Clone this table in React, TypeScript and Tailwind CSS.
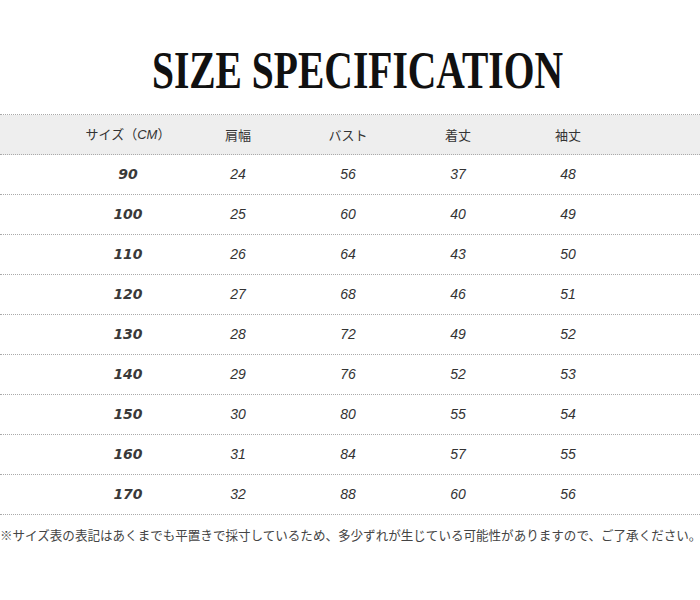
import React from "react";

const rows = [
  ["90", "24", "56", "37", "48"],
  ["100", "25", "60", "40", "49"],
  ["110", "26", "64", "43", "50"],
  ["120", "27", "68", "46", "51"],
  ["130", "28", "72", "49", "52"],
  ["140", "29", "76", "52", "53"],
  ["150", "30", "80", "55", "54"],
  ["160", "31", "84", "57", "55"],
  ["170", "32", "88", "60", "56"],
];

export default function App() {
  return (
    <div className="w-[700px] h-[600px] bg-white overflow-hidden">
      <div className="h-[114px] flex items-start justify-center pt-[42px] pl-[14px]">
        <h1
          className="text-[52px] leading-[58px] font-bold text-[#111] whitespace-nowrap scale-x-[0.76]"
          style={{ fontFamily: '"Liberation Serif", "DejaVu Serif", serif' }}
        >
          SIZE SPECIFICATION
        </h1>
      </div>
      <div className="border-t border-dotted border-[#aaa]">
        <div
          className="h-[40px] bg-[#eeeeee] border-b border-dotted border-[#aaa] grid grid-cols-[110px_110px_110px_110px_110px] pl-[73px] items-center text-[13px] text-[#333]"
          style={{ fontFamily: '"Noto Sans CJK JP", "Noto Sans", sans-serif' }}
        >
          <div className="text-center">
            サイズ（<span className="italic" style={{ fontFamily: '"Liberation Sans", sans-serif' }}>CM</span>）
          </div>
          <div className="text-center">肩幅</div>
          <div className="text-center">バスト</div>
          <div className="text-center">着丈</div>
          <div className="text-center">袖丈</div>
        </div>
        {rows.map((r) => (
          <div
            key={r[0]}
            className="h-[40px] border-b border-dotted border-[#aaa] grid grid-cols-[110px_110px_110px_110px_110px] pl-[73px] items-center text-[#333]"
          >
            <div
              className="text-center italic font-bold text-[14px] text-[#3a3a3a]"
              style={{ fontFamily: '"DejaVu Sans", sans-serif' }}
            >
              {r[0]}
            </div>
            {r.slice(1).map((v, i) => (
              <div
                key={i}
                className="text-center italic text-[14px]"
                style={{ fontFamily: '"Liberation Sans", sans-serif' }}
              >
                {v}
              </div>
            ))}
          </div>
        ))}
      </div>
      <p
        className="mt-[11px] text-[12.55px] leading-[18px] text-[#444] whitespace-nowrap"
        style={{ fontFamily: '"Noto Sans CJK JP", sans-serif' }}
      >
        ※サイズ表の表記はあくまでも平置きで採寸しているため、多少ずれが生じている可能性がありますので、ご了承ください。
      </p>
    </div>
  );
}
